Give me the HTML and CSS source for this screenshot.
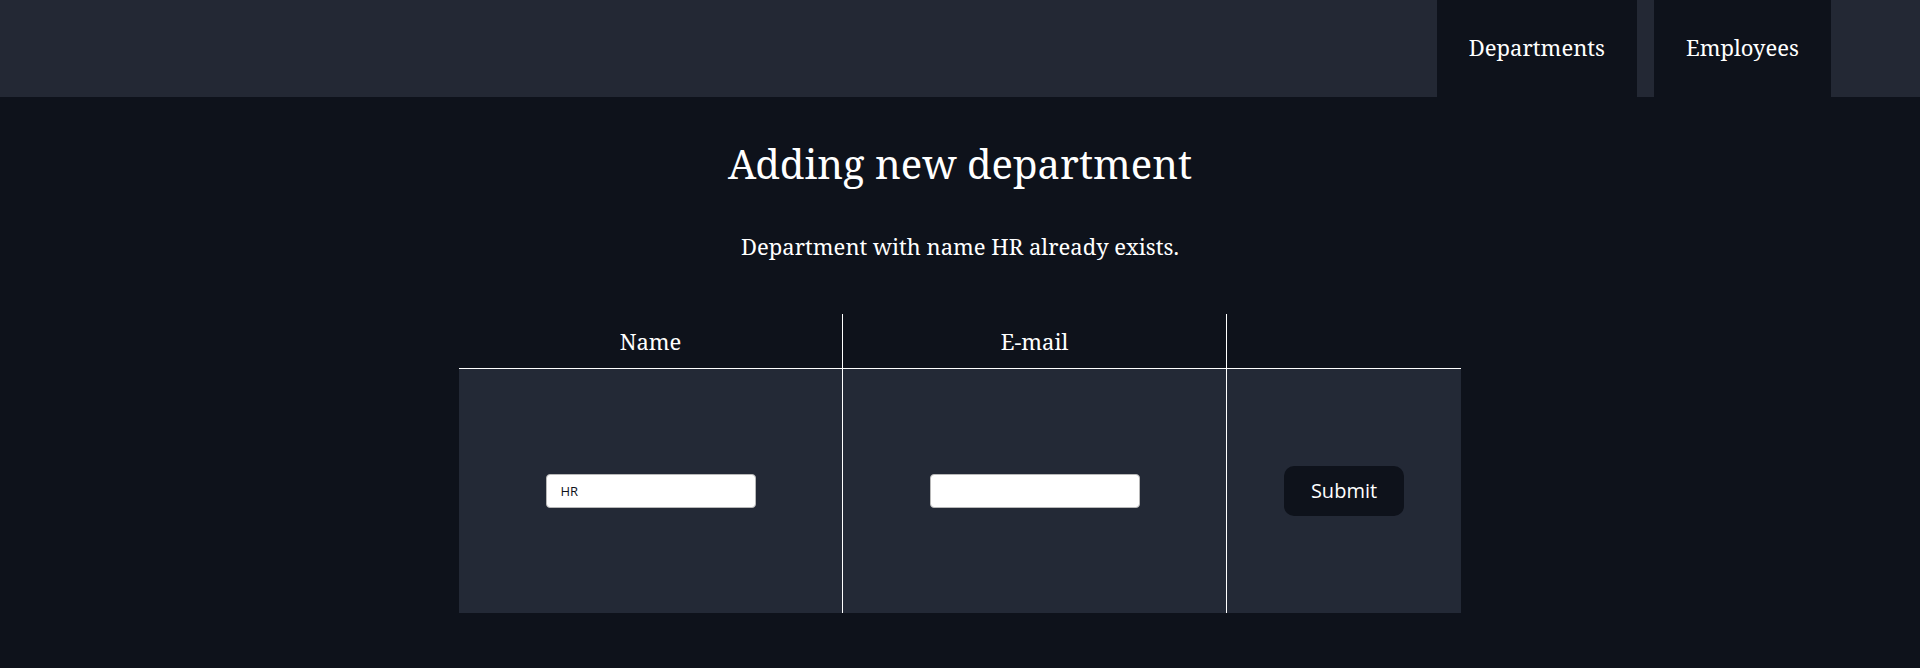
FILE: index.html
```html
<!DOCTYPE html>
<html lang="en">
<head>
<meta charset="utf-8">
<title>Adding new department</title>
<link rel="stylesheet" href="styles.css">
</head>
<body>
<nav class="nav">
  <a class="nav-tab" href="#">Departments</a>
  <a class="nav-tab" href="#">Employees</a>
</nav>
<main class="main">
  <h1 class="title">Adding new department</h1>
  <p class="message">Department with name HR already exists.</p>
  <form class="form">
    <table class="dept-table">
      <thead>
        <tr>
          <th class="col-name">Name</th>
          <th class="col-email">E-mail</th>
          <th class="col-action"></th>
        </tr>
      </thead>
      <tbody>
        <tr>
          <td><input class="field" type="text" value="HR"></td>
          <td><input class="field" type="text" value=""></td>
          <td><button class="submit" type="button">Submit</button></td>
        </tr>
      </tbody>
    </table>
  </form>
</main>
</body>
</html>
```
FILE: styles.css
```css
html, body {
  margin: 0;
  padding: 0;
}
body {
  background: #0e121b;
  color: #ffffff;
  font-family: "Noto Serif", "DejaVu Serif", serif;
  min-height: 668px;
}
.nav {
  display: flex;
  justify-content: flex-end;
  gap: 17px;
  height: 97px;
  padding-right: 89px;
  background: #232834;
}
.nav-tab {
  display: flex;
  align-items: center;
  padding: 0 32px 3px;
  background: #0e121b;
  color: #ffffff;
  text-decoration: none;
  font-size: 22px;
}
.main {
  display: flex;
  flex-direction: column;
  align-items: center;
}
.title {
  margin: 43px 0 0;
  font-size: 40px;
  font-weight: normal;
  line-height: 1.2;
}
.message {
  margin: 44px 0 0;
  font-size: 22px;
  line-height: 1.3;
}
.form {
  margin-top: 53px;
}
.dept-table {
  border-collapse: collapse;
  width: 1000px;
  table-layout: fixed;
}
.col-name, .col-email {
  width: 383px;
}
.col-action {
  width: 234px;
}
.dept-table th {
  height: 54px;
  font-weight: normal;
  font-size: 22px;
  border-bottom: 1px solid #ffffff;
  padding: 0;
}
.dept-table th:not(:last-child),
.dept-table td:not(:last-child) {
  border-right: 1px solid #ffffff;
}
.dept-table td {
  background: #232936;
  height: 244px;
  text-align: center;
  padding: 0;
}
.field {
  width: 210px;
  height: 34px;
  box-sizing: border-box;
  border: 1px solid #b8b8b8;
  border-radius: 4px;
  padding: 0 14px;
  font-family: "Open Sans", "Noto Sans", sans-serif;
  font-size: 13px;
  color: #0e121b;
  background: #ffffff;
}
.submit {
  width: 120px;
  height: 50px;
  border: none;
  border-radius: 10px;
  background: #0e121b;
  color: #ffffff;
  font-family: "Open Sans", "Noto Sans", sans-serif;
  font-size: 20px;
}
```
